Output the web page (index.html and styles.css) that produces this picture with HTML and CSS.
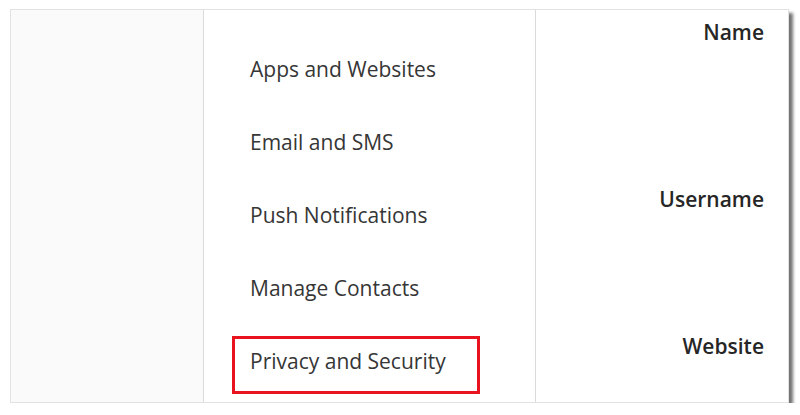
FILE: index.html
```html
<!DOCTYPE html>
<html lang="en">
<head>
	<meta charset="UTF-8">
	<title>Edit Profile</title>
	<link rel="stylesheet" href="styles.css">
</head>
<body>
	<div class="frame">
		<div class="side"></div>
		<ul class="menu">
			<li>Change Password</li>
			<li>Apps and Websites</li>
			<li>Email and SMS</li>
			<li>Push Notifications</li>
			<li>Manage Contacts</li>
			<li><span class="mark">Privacy and Security</span></li>
		</ul>
		<div class="form">
			<div class="row row-name"><label>Name</label></div>
			<div class="row row-user"><label>Username</label></div>
			<div class="row"><label>Website</label></div>
		</div>
	</div>
</body>
</html>
```

FILE: styles.css
```css
ul,li {
	padding: 0;
	margin: 0;
}

body {
	margin: 0;
	background: #fff;
	font-family: "Open Sans", "Noto Sans", sans-serif;
	font-size: 21px;
	color: #262626;
}

ul {
	list-style: none;
}

.frame {
	display: flex;
	width: 777px;
	height: 392px;
	margin: 9px 0 0 10px;
	border: 1px solid #e2e2e2;
	background: #fff;
	box-shadow: 4px 4px 3px rgba(0, 0, 0, 0.55);
	overflow: hidden;
}

.side {
	width: 192px;
	background: #fafafa;
	border-right: 1px solid #dbdbdb;
}

.menu {
	width: 331px;
	margin-top: -50px;
	border-right: 1px solid #dbdbdb;
}

.menu li {
	height: 73px;
	line-height: 73px;
	padding-left: 46px;
	color: #363636;
}

.menu .mark {
	display: inline-block;
	line-height: 24px;
	padding: 10px 31px 18px 15px;
	margin-left: -18px;
	border: 3px solid #e8131f;
}

.form {
	flex: 1;
	padding-top: 10px;
	padding-right: 24px;
}

.row {
	text-align: right;
	line-height: 24px;
}

.row-name {
	height: 167px;
}

.row-user {
	height: 147px;
}

.row label {
	font-weight: 600;
	color: #262626;
}
```
